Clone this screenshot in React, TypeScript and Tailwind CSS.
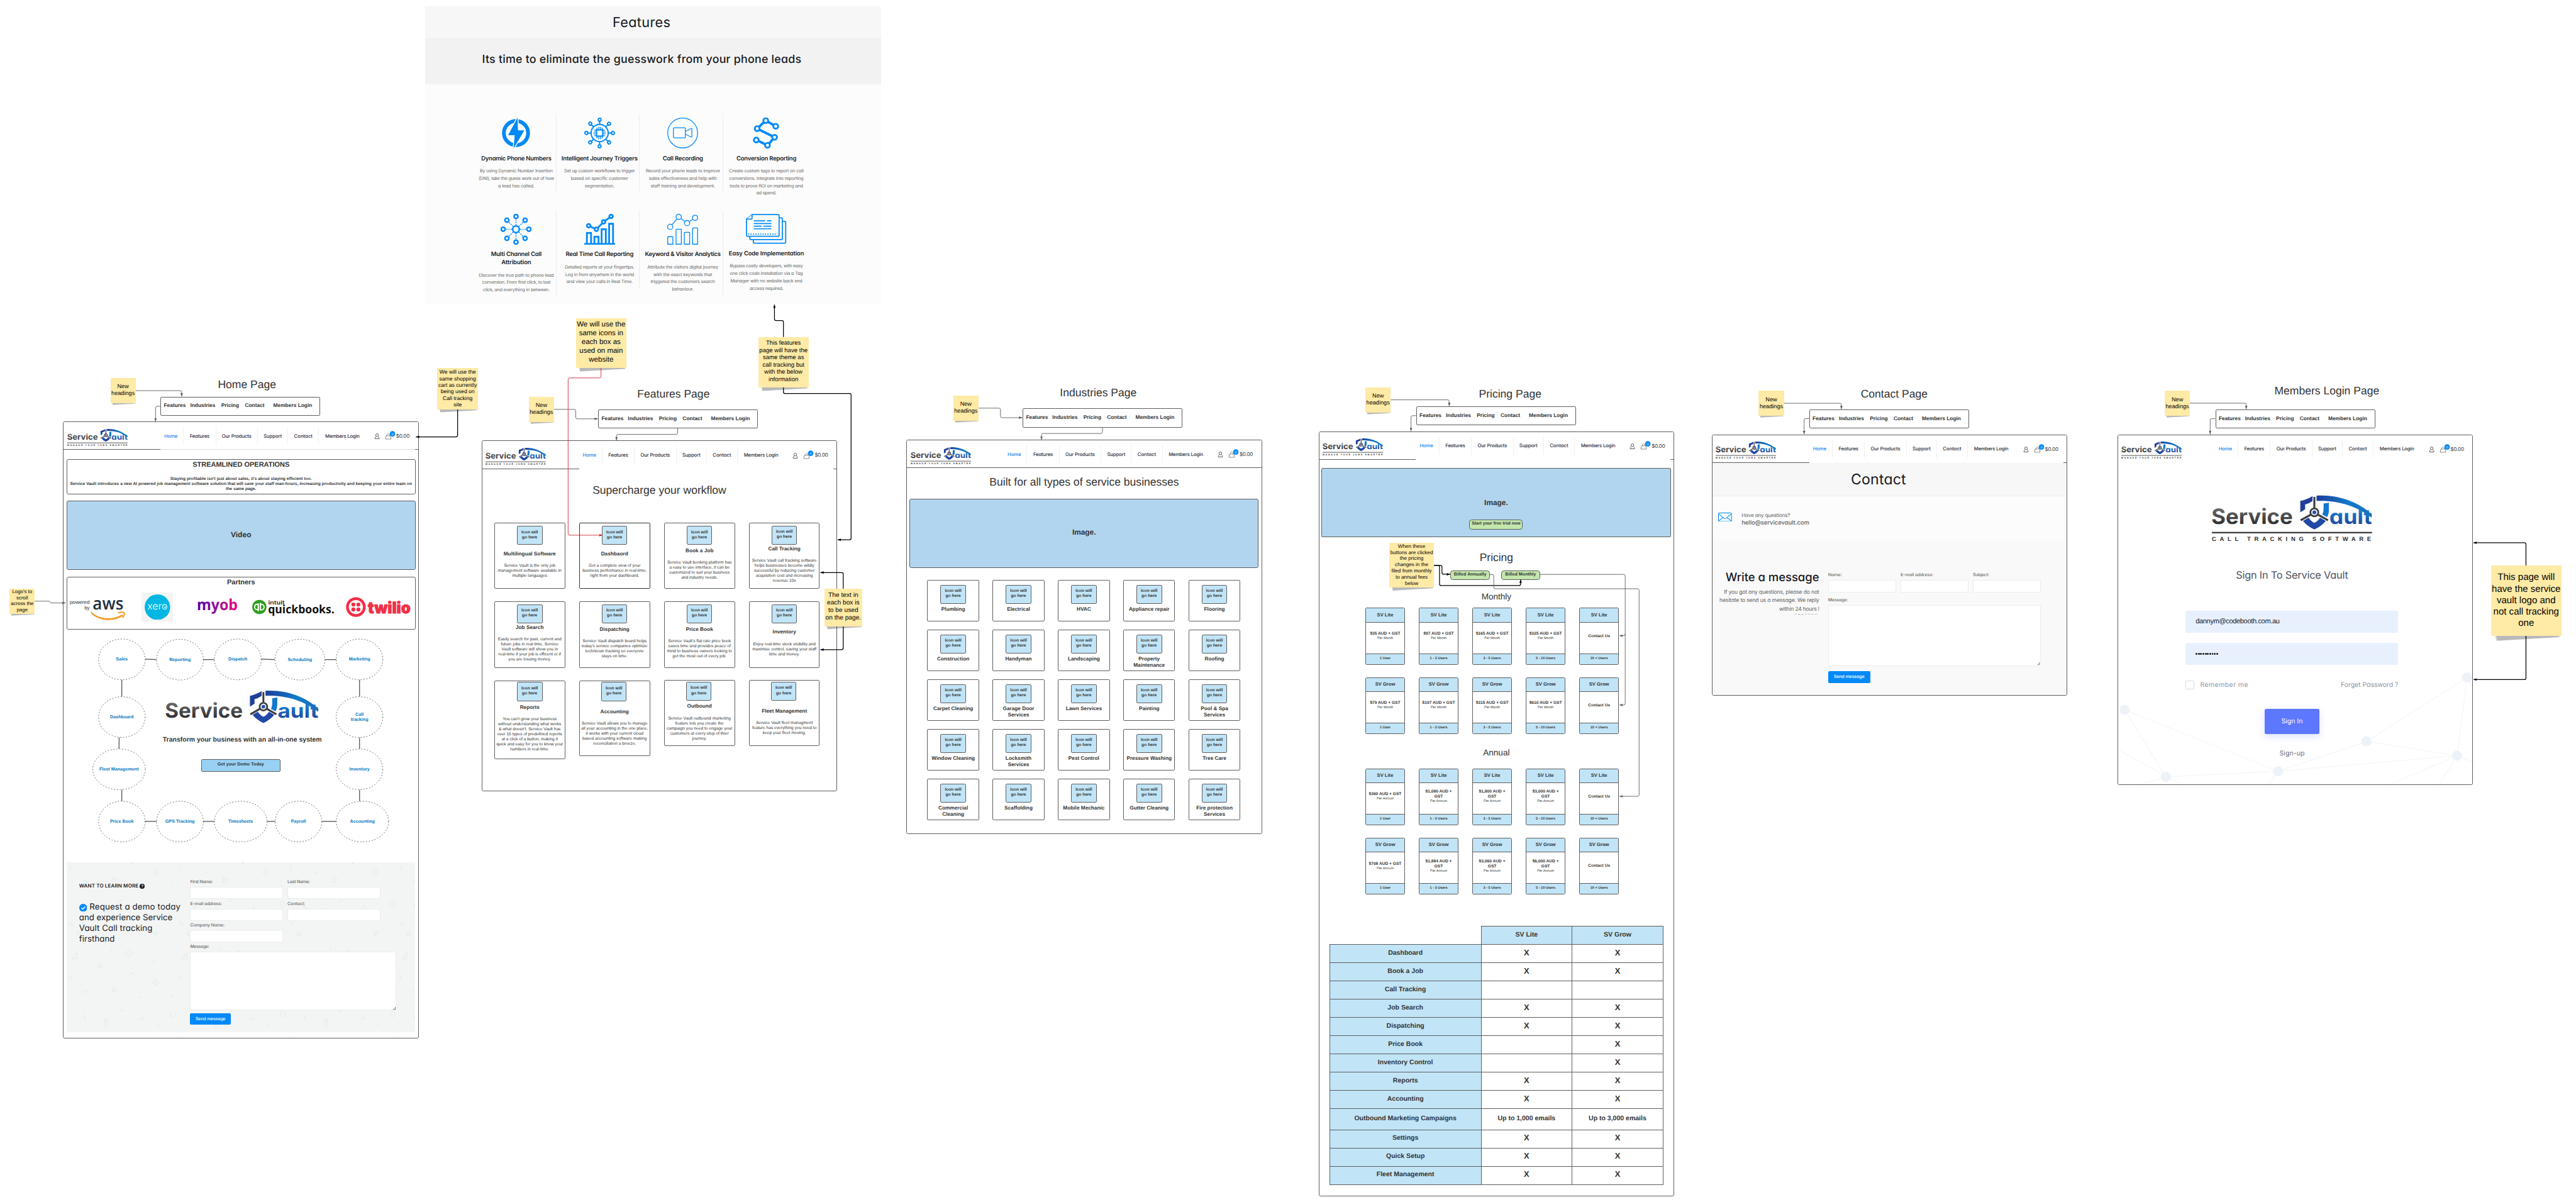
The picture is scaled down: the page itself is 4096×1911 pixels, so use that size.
import { useId, useLayoutEffect, useRef, useState } from "react";
import type { ReactNode } from "react";

const POP = "[font-family:Inter,sans-serif] [font-feature-settings:'cv11']";

/* One line of text, tracked so that it spans exactly `w` pixels. */
function Fit({ w, children, className = "" }: { w: number; children: string; className?: string }) {
  const outer = useRef<HTMLSpanElement>(null);
  const inner = useRef<HTMLSpanElement>(null);
  const [spacing, setSpacing] = useState(0);
  useLayoutEffect(() => {
    if (!outer.current || !inner.current) return;
    const scale = outer.current.getBoundingClientRect().width / w;
    const natural = inner.current.getBoundingClientRect().width / scale;
    setSpacing((w - natural) / children.length);
  }, [w, children]);
  return (
    <span ref={outer} className={"block shrink-0 whitespace-pre " + className} style={{ width: w }}>
      <span ref={inner} style={{ letterSpacing: spacing }}>
        {children}
      </span>
    </span>
  );
}

/* ---------- logo ---------- */

function VaultLogo({ tagline, className }: { tagline?: string; className: string }) {
  const id = useId();
  const blue = `${id}b`;
  const grey = `${id}g`;
  const sweep = `${id}s`;
  return (
    <svg viewBox={tagline ? "0 0 364 105" : "0 0 364 77"} className={"overflow-visible " + className}>
      <defs>
        <linearGradient id={grey} x1="0" y1="0" x2="0" y2="1">
          <stop offset="0.2" stopColor="#6a6a6c" />
          <stop offset="0.8" stopColor="#2f2f31" />
        </linearGradient>
        <linearGradient id={blue} x1="0" y1="0" x2="0" y2="1">
          <stop offset="0.2" stopColor="#1584d6" />
          <stop offset="0.9" stopColor="#213f9a" />
        </linearGradient>
        <linearGradient id={sweep} x1="0" y1="0" x2="1" y2="0">
          <stop offset="0" stopColor="#1d3f9b" />
          <stop offset="0.6" stopColor="#0f7cc9" />
          <stop offset="1" stopColor="#1c6fb8" />
        </linearGradient>
      </defs>
      <text x="-1" y="64" fontFamily="Inter, sans-serif" fontWeight="700" fontSize="48" textLength="185" lengthAdjust="spacingAndGlyphs" fill={`url(#${grey})`}>
        Service
      </text>
      <text x="267" y="64" fontFamily="Inter, sans-serif" fontWeight="700" fontSize="46" textLength="97" lengthAdjust="spacingAndGlyphs" fill={`url(#${blue})`}>
        ault
      </text>
      <path d="M201 38V12Q216 9 229 1V12Q221 18 212 20V31Z" fill="#213f9a" />
      <path d="M238 0C286 -3 334 14 364 43L363 50C330 24 286 10 238 12Z" fill={`url(#${sweep})`} />
      <path d="M254 18L266 16V34Q266 42 262 49L251 43Q254 38 254 30Z" fill="#1178cc" />
      <path d="M206 56L219 49Q225 58 233 62Q241 58 247 49L260 56Q250 69 233 77Q216 69 206 56Z" fill="#2148a6" />
      <g stroke="#fff" strokeWidth="8" fill="none">
        <path d="M233 36V4M233 38L205 54M233 38L261 54" />
      </g>
      <g stroke="#3c3c40" strokeWidth="4.5" fill="none">
        <path d="M233 28V3M225 43L202 56M241 43L264 56" />
        <circle cx="233" cy="38" r="9" fill="#fff" strokeWidth="4" />
      </g>
      <circle cx="233" cy="38" r="4.5" fill="#2a55ad" />
      {tagline && (
        <>
          <rect x="0" y="82.5" width="364" height="3" fill="#2b2b2d" />
          <text x="0" y="103.5" fontFamily="Liberation Sans, Arial, sans-serif" fontWeight="700" fontSize="13.5" textLength="362" lengthAdjust="spacing" fill="#2b2b2d">
            {tagline}
          </text>
        </>
      )}
    </svg>
  );
}

/* ---------- shared page chrome ---------- */

const NAV: [string, number, string][] = [
  ["Home", 30.4, "w-[58px] text-[#1a87ec]"],
  ["Features", 45, "w-[73.3px] text-[#2b2b3a]"],
  ["Our Products", 67, "w-[95px] text-[#2b2b3a]"],
  ["Support", 41.2, "w-[69px] text-[#2b2b3a]"],
  ["Contact", 42, "w-[70.2px] text-[#2b2b3a]"],
  ["Members Login", 78.2, "w-[106px] border-r-0 text-[#2b2b3a]"],
];

function SiteHeader({ rule }: { rule: "gap" | "full" | "light" | "none" }) {
  return (
    <div className="relative h-[63px] w-full shrink-0 bg-white">
      <div className={"flex h-full items-center " + POP}>
        <div className="w-[215.5px] pl-[8px] pt-[7px]">
          <VaultLogo tagline="MANAGE YOUR JOBS SMARTER" className="h-[39.5px] w-[137px]" />
        </div>
        <nav className="flex">
          {NAV.map(([label, w, cls]) => (
            <div key={label} className={"flex h-[40px] items-center justify-center border-r border-[#efefef] pt-[1px] text-[11px] font-medium " + cls}>
              <Fit w={w}>{label}</Fit>
            </div>
          ))}
        </nav>
        <svg viewBox="0 0 47 20" className="ml-[19px] h-[20px] w-[47px] overflow-visible">
          <g fill="none" stroke="#3a3a3a" strokeWidth="1.2">
            <circle cx="6.5" cy="8.2" r="3.1" />
            <path d="M4.5 10.8C2.500 12.600 1.800 14.100 1.600 16.500H11.400C11.200 14.100 10.500 12.600 8.500 10.800" />
            <path d="M27.200 9.800H37.200L38.600 17.200H25.800Z" stroke="#777" />
            <path d="M29 9.800C29.200 3.600 35.200 3.600 35.400 9.800" stroke="#777" />
          </g>
          <circle cx="41.6" cy="5.200" r="6.200" fill="#0089f7" />
          <text x="41.6" y="8" fontSize="7.500" textAnchor="middle" fill="#fff">0</text>
        </svg>
        <Fit w={30.5} className="ml-[3px] text-[11.500px] text-[#333]">$0.00</Fit>
      </div>
      {rule !== "none" && (
        <div className="absolute bottom-0 left-0 flex w-full justify-between">
          <div className={rule === "full" ? "h-[1.5px] w-full bg-[#5e5e5e]" : "h-[1.5px] w-[220px] bg-[#5e5e5e]"} />
          {rule === "light" && <div className="h-[1.5px] grow bg-[#dddddd]" />}
          {rule !== "full" && <div className="h-[1.5px] w-[7px] bg-[#5e5e5e]" />}
        </div>
      )}
    </div>
  );
}

function Page({ at, rule, children }: { at: string; rule: "gap" | "full" | "light" | "none"; children: ReactNode }) {
  return (
    <section className={"absolute flex w-[808.5px] flex-col overflow-hidden rounded-[4px] border-[1.5px] border-[#5e5e5e] bg-white " + at}>
      <SiteHeader rule={rule} />
      {children}
    </section>
  );
}

const PAGE_TITLES: [string, string][] = [
  ["Home Page", "left-[561.5px] top-[859px]"],
  ["Features Page", "left-[1531px] top-[881px]"],
  ["Industries Page", "left-[2496.7px] top-[878px]"],
  ["Pricing Page", "left-[3433px] top-[881px]"],
  ["Contact Page", "left-[4306px] top-[881px]"],
  ["Members Login Page", "left-[5289.6px] top-[874px]"],
];

const HEADING_BOXES = [
  "left-[365px] top-[901.5px]",
  "left-[1360px] top-[930.3px]",
  "left-[2325px] top-[928px]",
  "left-[3219.5px] top-[923.6px]",
  "left-[4113px] top-[930.3px]",
  "left-[5036.4px] top-[930.5px]",
];

const NOTES: [string, string][] = [
  ["New\nheadings", "left-[251px] top-[859px] size-[57.5px] text-[13.1px]"],
  ["We will use the\nsame shopping\ncart as currently\nbeing used on\nCall tracking\nsite", "left-[994px] top-[837px] h-[93.5px] w-[92.6px] text-[12.3px]"],
  ["Logo's to\nscroll\nacross the\npage", "left-[21.7px] top-[1338px] size-[57.5px] text-[11.3px]"],
  ["We will use the\nsame icons in\neach box as\nused on main\nwebsite", "left-[1309px] top-[723px] h-[114px] w-[115px] text-[16.45px]"],
  ["This features\npage will have the\nsame theme as\ncall tracking but\nwith the below\ninformation", "left-[1724px] top-[766px] size-[114px] text-[13.7px]"],
  ["New\nheadings", "left-[1202px] top-[902px] size-[57.5px] text-[13.1px]"],
  ["The text in\neach box is\nto be used\non the page.", "left-[1874px] top-[1338px] size-[86px] text-[14.6px]"],
  ["New\nheadings", "left-[2167px] top-[899px] size-[57.5px] text-[13.1px]"],
  ["New\nheadings", "left-[3104px] top-[880px] size-[57.5px] text-[13.1px]"],
  ["When these\nbuttons are clicked\nthe pricing\nchanges in the\nfiled from monthly\nto annual fees\nbelow", "left-[3158px] top-[1234px] size-[102px] text-[11.65px]"],
  ["New\nheadings", "left-[3998px] top-[888px] size-[57.5px] text-[13.1px]"],
  ["New\nheadings", "left-[4921px] top-[888px] size-[57.5px] text-[13.1px]"],
  ["This page will\nhave the service\nvault logo and\nnot call tracking\none", "left-[5663px] top-[1286px] size-[159.5px] text-[21.5px]"],
];

function Note({ text, at }: { text: string; at: string }) {
  return (
    <div className={"absolute " + at}>
      <svg viewBox="0 0 100 8" preserveAspectRatio="none" className="absolute left-0 top-full h-[7%] w-full overflow-visible">
        <path d="M6 -2H98L97 2L8 8Z" fill="#000" opacity="0.27" className="blur-[0.8px]" />
      </svg>
      <div className="relative flex size-full items-center justify-center whitespace-pre bg-[#ffeaa6] pb-[2px] text-center leading-[1.2] text-black">
        {text}
      </div>
    </div>
  );
}

function IconSlot({ className = "" }: { className?: string }) {
  return (
    <div className={"flex h-[43.5px] w-[58px] shrink-0 items-center justify-center whitespace-pre rounded-[3px] border-[1.5px] border-[#5e5e5e] bg-[#c1e4f7] pb-[2px] text-center text-[9.6px] font-bold leading-[11.5px] " + className}>
      {"Icon will\ngo here"}
    </div>
  );
}

/* ---------- home page ---------- */

function PartnerLogos() {
  return (
    <div className="mt-[13px] flex h-[66px] items-center">
      <svg viewBox="0 0 130 66" className="ml-[7px] h-[66px] w-[130px] overflow-visible">
        <g fill="#232f3e">
          <text x="45" y="26" fontSize="11.3" textAnchor="end" textLength="45" lengthAdjust="spacingAndGlyphs">powered</text>
          <text x="45" y="39" fontSize="11.3" textAnchor="end">by</text>
          <text x="52" y="39" fontSize="39" fontWeight="600" fontFamily="Open Sans, sans-serif" textLength="70" lengthAdjust="spacingAndGlyphs">aws</text>
        </g>
        <path d="M49 45.5C66 62 96 64 118 51.5C119.5 50.6 120.6 52 119.4 53C100 66 68 64.5 49.5 47.5Z" fill="#f7981f" stroke="#f7981f" strokeWidth="1.8" />
        <path d="M110 47C115 44 121 44.5 123.5 46C125.5 48 123 54.5 119.5 57.5" fill="none" stroke="#f7981f" strokeWidth="2.8" />
      </svg>
      <div className="ml-[32.5px] flex h-[65px] w-[72px] items-center justify-center bg-[#f4f4f4]">
        <svg viewBox="0 0 58 58" className="size-[58px]">
          <circle cx="29" cy="29" r="29" fill="#00b7e3" />
          <text x="29" y="34.5" fontSize="22" fontWeight="300" fontFamily="Inter, sans-serif" textAnchor="middle" fill="#fff" textLength="46" lengthAdjust="spacingAndGlyphs">xero</text>
          <circle cx="46.5" cy="29" r="1.6" fill="#fff" />
        </svg>
      </div>
      <svg viewBox="0 0 94 46" className="ml-[53px] h-[46px] w-[94px] overflow-visible">
        <defs>
          <linearGradient id="myob" x1="0" x2="1">
            <stop offset="0.1" stopColor="#5a00a5" />
            <stop offset="0.55" stopColor="#a0139a" />
            <stop offset="1" stopColor="#f00078" />
          </linearGradient>
        </defs>
        <text x="0" y="30" fontSize="35" fontWeight="700" fontFamily="Open Sans, sans-serif" textLength="93" lengthAdjust="spacingAndGlyphs" fill="url(#myob)">myob</text>
      </svg>
      <svg viewBox="0 0 188 46" className="ml-[32px] h-[46px] w-[188px] overflow-visible">
        <circle cx="16.3" cy="23" r="16.2" fill="#2ca01c" />
        <g fill="none" stroke="#fff" strokeWidth="2.6">
          <path d="M15.4 16.4H11.8A6.2 6.2 0 0 0 11.8 29H13.8V20M17.4 29.4H20.8A6.2 6.2 0 0 0 20.8 16.8H18.8V26" />
          <path d="M13.8 16.4V32.6M18.8 13.4V29.4" />
        </g>
        <text x="36.5" y="17.5" fontSize="12.5" fontWeight="600" fontFamily="Inter, sans-serif" textLength="37" lengthAdjust="spacingAndGlyphs" fill="#222">intuit</text>
        <text x="36" y="36.5" fontSize="26" fontWeight="700" fontFamily="Open Sans, sans-serif" textLength="151" lengthAdjust="spacingAndGlyphs" fill="#111">quickbooks.</text>
      </svg>
      <svg viewBox="0 0 148 46" className="ml-[26px] h-[46px] w-[148px] overflow-visible">
        <circle cx="22.7" cy="23" r="19.2" fill="none" stroke="#f22f46" strokeWidth="6.4" />
        <g fill="#f22f46">
          <circle cx="17" cy="17.3" r="4.6" />
          <circle cx="28.4" cy="17.3" r="4.6" />
          <circle cx="17" cy="28.7" r="4.6" />
          <circle cx="28.4" cy="28.7" r="4.6" />
          <text x="50" y="36.6" fontSize="36" fontWeight="900" fontFamily="Inter, sans-serif" textLength="97" lengthAdjust="spacingAndGlyphs" stroke="#f22f46" strokeWidth="1.2">twilio</text>
        </g>
      </svg>
    </div>
  );
}

/* label, left, right, top */
const MODULES: [string, number, number, number][] = [
  ["Sales", 224.2, 330, 1452.4],
  ["Reporting", 356, 462.3, 1453],
  ["Dispatch", 487.5, 593.9, 1452.4],
  ["Scheduling", 625.2, 738.7, 1453],
  ["Marketing", 764.5, 870.3, 1452.4],
  ["Dashboard", 224.2, 330, 1583.5],
  ["Call\ntracking", 764.5, 870.3, 1583.5],
  ["Fleet Management", 211, 330.5, 1702.2],
  ["Inventory", 764.5, 870.3, 1702.2],
  ["Price Book", 224.2, 330, 1821],
  ["GPS Tracking", 356, 462.3, 1821],
  ["Timesheets", 487.5, 607, 1821],
  ["Payroll", 625.7, 731.6, 1821],
  ["Accounting", 764.5, 883.5, 1821],
];

function ModuleDiagram() {
  return (
    <div className="relative flex h-[529px] w-full shrink-0 flex-col items-center">
      <svg viewBox="144.5 1431 806 529" className="absolute inset-0 h-[529px] w-[806px]">
        <g stroke="#4d4d4d" strokeWidth="1.8" fill="none">
          <path d="M330 1498L356 1499M462 1499H488M594 1498L625 1499M739 1499H765M330 1867H356M462 1867H488M607 1867H626M732 1867H765" />
          <path d="M277 1545V1583M271 1676L270.5 1702M277 1795V1821M817.5 1545V1583M817.5 1676V1702M817.5 1795V1821" />
        </g>
        {MODULES.map(([label, x1, x2, y]) => {
          const cx = (x1 + x2) / 2;
          const lines = label.split("\n");
          return (
            <g key={label}>
              <ellipse cx={cx} cy={y + 46.3} rx={(x2 - x1) / 2} ry="46.3" fill="#fff" stroke="#4d4d4d" strokeWidth="1.3" strokeDasharray="2.6 4" />
              {lines.map((line, i) => (
                <text key={line} x={cx} y={y + 49 + (i - (lines.length - 1) / 2) * 12.4} textAnchor="middle" fontSize="10.25" fontWeight="700" fill="#0277bd">
                  {line}
                </text>
              ))}
            </g>
          );
        })}
      </svg>
      <VaultLogo className="relative ml-[5px] mt-[139px] h-[74px] w-[348px]" />
      <p className="relative ml-[7px] mt-[30px] text-[15px] font-bold leading-[18px]">Transform your business with an all-in-one system</p>
      <div className="relative mt-[33px] flex h-[28.7px] w-[180px] items-center justify-center rounded-[3px] border-[1.5px] border-[#5e5e5e] bg-[#99d1f4] pb-[3px] text-[10.3px] font-bold">
        Get your Demo Today
      </div>
    </div>
  );
}

function ConfettiPattern() {
  return (
    <svg className="absolute inset-0 size-full">
      <defs>
        <pattern id="confetti" width="250" height="250" patternUnits="userSpaceOnUse">
          <g fill="none" stroke="#e6e9e9" strokeWidth="1.6">
            <path d="M7 6L11 17M63 24H71M202 15L207.500 22L202 29L196.500 22ZM35 48A6.500 6.500 0 0 1 48 48" />
            <path d="M105 34V46L115 40ZM118 91L128 84M164 106H175V96M40 95L38.500 101H43L41.500 107M85 107L91 105L94 121L88 123Z" />
            <path d="M6 135L15 144M197 159H207L202 166ZM100 194V202M12 219L23 219L23 205ZM192 219L203 227M76 230L81 235L76 241L71 235Z" />
            <circle cx="241" cy="95" r="6" />
            <circle cx="28" cy="162" r="4" />
            <circle cx="141" cy="207" r="6" />
          </g>
          <g fill="#e6e9e9">
            <circle cx="150" cy="2" r="2.2" />
            <circle cx="239" cy="53" r="1.8" />
            <circle cx="208" cy="120" r="1.8" />
            <circle cx="70" cy="168" r="1.8" />
            <circle cx="165" cy="57" r="2" />
          </g>
        </pattern>
      </defs>
      <rect width="100%" height="100%" fill="url(#confetti)" />
    </svg>
  );
}

function Field({ label, w, box }: { label: string; w: number; box: string }) {
  return (
    <label className="block">
      <Fit w={w} className="text-[10px] font-medium leading-[14px] text-[#6c6c6c]">{label}</Fit>
      <div className={"relative border border-[#ececec] bg-white " + box} />
    </label>
  );
}

const GRIP = "after:absolute after:bottom-[1px] after:right-[1px] after:size-[5px] after:border-b after:border-r after:border-[#777] after:content-['']";

function DemoForm() {
  return (
    <div className={"relative ml-[6.5px] h-[385.5px] w-[793px] shrink-0 bg-[#f3f5f5] " + POP}>
      <ConfettiPattern />
      <div className="relative flex">
        <div className="w-[281.5px] pl-[29px] pt-[46px] text-[#161922]">
          <div className="flex items-center gap-[3px]">
            <Fit w={135} className="text-[11.5px] font-semibold leading-[17px]">WANT TO LEARN MORE</Fit>
            <span className="flex size-[11.5px] items-center justify-center rounded-full bg-[#161922] text-[9px] font-bold text-white">?</span>
          </div>
          <div className="mt-[27.5px] text-[19px] leading-[24.3px]">
            <div className="flex items-center gap-[5.5px]">
              <svg viewBox="0 0 18 18" className="size-[18px]">
                <circle cx="9" cy="9" r="9" fill="#0089f7" />
                <path d="M4.8 9.2L7.9 12.2L13.4 6.4" fill="none" stroke="#fff" strokeWidth="2.2" />
              </svg>
              <Fit w={207.3}>Request a demo today</Fit>
            </div>
            <Fit w={212.3}>and experience Service</Fit>
            <Fit w={166.7}>Vault Call tracking</Fit>
            <Fit w={81}>firsthand</Fit>
          </div>
        </div>
        <div className="flex flex-col gap-[3.2px] pt-[37.5px]">
          <div className="flex gap-[10px]">
            <Field label="First Name:" w={51} box="mt-[4.7px] h-[27px] w-[211px]" />
            <Field label="Last Name:" w={51} box="mt-[4.7px] h-[27px] w-[211px]" />
          </div>
          <div className="flex gap-[10px]">
            <Field label="E-mail address:" w={72} box="mt-[4.7px] h-[27px] w-[211px]" />
            <Field label="Contact:" w={40} box="mt-[4.7px] h-[27px] w-[211px]" />
          </div>
          <Field label="Company Name:" w={78} box="mt-[4.7px] h-[27px] w-[211px]" />
          <Field label="Message:" w={43} box={"mt-[4.7px] h-[133.5px] w-[469px] " + GRIP} />
          <div className="mt-[3.5px] flex h-[25.7px] w-[92.5px] items-center justify-center rounded-[3px] bg-[#0089f7] text-[10px] font-medium text-white">
            <Fit w={68}>Send message</Fit>
          </div>
        </div>
      </div>
    </div>
  );
}

function HomePage() {
  const box = "ml-[6.5px] w-[794px] shrink-0 rounded-[4px] border-[1.5px] border-[#5e5e5e] ";
  return (
    <Page at="left-[143px] top-[958.5px] h-[1402.5px]" rule="light">
      <div className={box + "mt-[21px] h-[79.5px] pt-[2px] text-center font-bold"}>
        <p className="text-[15.7px] leading-[19px]">STREAMLINED OPERATIONS</p>
        <p className="mt-[17px] whitespace-pre text-[9.6px] leading-[11.5px]">
          {"Staying profitable isn't just about sales, it's about staying efficient too.\nService Vault introduces a new AI powered job management software solution that will save your staff man-hours, increasing productivity and keeping your entire team on\nthe same page."}
        </p>
      </div>
      <div className={box + "mt-[14.5px] flex h-[158px] items-center justify-center bg-[#b1d5ef] pb-[3px] text-[17.2px] font-bold"}>Video</div>
      <div className={box + "mt-[15.5px] h-[120px] pt-[2px]"}>
        <p className="text-center text-[15.7px] font-bold leading-[19px]">Partners</p>
        <PartnerLogos />
      </div>
      <ModuleDiagram />
      <DemoForm />
    </Page>
  );
}

/* ---------- call tracking features sheet ---------- */

const SPOKES = [0, 45, 90, 135, 180, 225, 270, 315];

function BoltIcon() {
  return (
    <svg viewBox="0 0 70 70" className="size-[70px]">
      <circle cx="35" cy="35" r="27.5" fill="none" stroke="#0089f7" strokeWidth="8.5" />
      <path d="M38.5 0L17 40H32L29.500 70L54 29H39.500Z" fill="#0089f7" stroke="#fcfcfc" strokeWidth="4" paintOrder="stroke" />
    </svg>
  );
}

function ChipIcon() {
  return (
    <svg viewBox="0 0 70 70" className="size-[70px]">
      <g fill="none" stroke="#0089f7" strokeWidth="2.8">
        <circle cx="35" cy="35" r="19.5" />
        {SPOKES.map((a) => (
          <g key={a} transform={`rotate(${a} 35 35)`}>
            <path d="M35 15.5V8" />
            <circle cx="35" cy="4.8" r="3.4" />
          </g>
        ))}
        <rect x="28" y="28" width="14" height="14" />
        <path d="M29 28V23M33 28V21M37 28V21M41 28V23M29 42V47M33 42V49M37 42V49M41 42V47M28 29H23M28 33H21M28 37H21M28 41H23M42 29H47M42 33H49M42 37H49M42 41H47" strokeWidth="2" />
      </g>
    </svg>
  );
}

function CameraIcon() {
  return (
    <svg viewBox="0 0 70 70" className="size-[70px]">
      <g fill="none" stroke="#0089f7" strokeWidth="1.8" strokeLinejoin="round">
        <circle cx="35" cy="35" r="34" />
        <rect x="14" y="23" width="27" height="23" rx="1.5" />
        <path d="M41 31.5L54 25Q56 24.500 56 26.500V42.500Q56 44.500 54 44L41 37.500" />
      </g>
    </svg>
  );
}

function PathIcon() {
  const nodes = [[56.4, 19.6], [33.7, 6.7], [14.2, 25], [53.8, 44.6], [37.7, 63], [12.2, 50.9]];
  return (
    <svg viewBox="0 0 70 70" className="size-[70px]">
      <polyline points={nodes.map((n) => n.join(",")).join(" ")} fill="none" stroke="#0089f7" strokeWidth="5.5" />
      {nodes.map(([x, y]) => (
        <circle key={x} cx={x} cy={y} r="5.5" fill="#fcfcfc" stroke="#0089f7" strokeWidth="4" />
      ))}
    </svg>
  );
}

function HubIcon() {
  return (
    <svg viewBox="0 0 70 70" className="size-[70px]">
      <g fill="none" stroke="#0089f7" strokeWidth="3.6">
        <circle cx="35" cy="35" r="7.5" />
        {SPOKES.map((a) => (
          <g key={a} transform={`rotate(${a} 35 35)`}>
            <path d="M35 25.5V10" strokeWidth="2.4" strokeDasharray="2.4 2.6" />
            <circle cx="35" cy="5.8" r="4.5" fill="#fcfcfc" />
          </g>
        ))}
      </g>
    </svg>
  );
}

function TrendIcon({ bold }: { bold: boolean }) {
  const line = bold
    ? [[10, 27], [27.5, 35], [44, 18.3], [61, 5.8]]
    : [[6.7, 29.5], [26, 6.8], [45, 21], [63.2, 9]];
  return (
    <svg viewBox="0 0 70 70" className="size-[70px]">
      <g fill="none" stroke="#0089f7" strokeWidth={bold ? 4 : 1.9}>
        {bold ? (
          <path d="M6 68V43.500H15.500V68M23 68V52H32.500V68M39.500 68V35H49V68M56.500 68V22.500H65.500V68M0 68.500H70" />
        ) : (
          <path d="M1 69V53Q1 51.800 2.200 51.800H11.500Q12.700 51.800 12.700 53V69ZM20 69V36Q20 34.800 21.200 34.800H30.800Q32 34.800 32 36V69ZM38.800 69V43Q38.800 42 40 42H49.700Q50.900 42 50.900 43V69ZM57.600 69V33.200Q57.600 32 58.800 32H67.900Q69 32 69 33.200V69Z" />
        )}
        <polyline points={line.map((n) => n.join(",")).join(" ")} />
        {line.map(([x, y]) => (
          <circle key={x} cx={x} cy={y} r={bold ? 4 : 6} fill="#fcfcfc" />
        ))}
      </g>
    </svg>
  );
}

function DocsIcon() {
  return (
    <svg viewBox="0 0 92 68" className="mb-[2px] h-[68px] w-[92px]">
      <g fill="#fcfcfc" stroke="#0089f7" strokeWidth="2.5" strokeLinejoin="round">
        <rect x="17" y="17" width="73.5" height="49.5" rx="2.5" />
        <rect x="9" y="9" width="74" height="49.5" rx="2.5" />
        <path d="M14 1.5H73Q75.500 1.500 75.500 4V48.500Q75.500 51 73 51H4Q1.500 51 1.500 48.500V12Z" />
        <path d="M14 1.5V9.500Q14 12 11.500 12H1.500" />
      </g>
      <g stroke="#0089f7" strokeWidth="2.4">
        <path d="M18 16H44M48 16H58M18 22H58M18 28H36M40 28H58M18 34H58" />
        <path d="M5 46H72" strokeDasharray="2.5 3" />
      </g>
    </svg>
  );
}

type Line = [string, number];
type FeatureCol = { icon: ReactNode; title: Line[]; body: Line[]; rule: string; pad: string };

const FEATURE_ROWS: FeatureCol[][] = [
  [
    { icon: <BoltIcon />, pad: "mt-[15.5px]", title: [["Dynamic Phone Numbers", 159.4]], body: [["By using Dynamic Number Insertion", 165.4], ["(DNI), take the guess work out of how", 171.4], ["a lead has called.", 82.4]], rule: "h-[177px] border-r" },
    { icon: <ChipIcon />, pad: "mt-[15.5px]", title: [["Intelligent Journey Triggers", 172.8]], body: [["Set up custom workflows to trigger", 160.7], ["based on specific customer", 130], ["segmentation.", 67]], rule: "h-[177px] border-r" },
    { icon: <CameraIcon />, pad: "mt-[15.5px]", title: [["Call Recording", 91.7]], body: [["Record your phone leads to improve", 168.7], ["sales effectiveness and help with", 154], ["staff training and development.", 146.6]], rule: "h-[177px] border-r" },
    { icon: <PathIcon />, pad: "mt-[15.5px]", title: [["Conversion Reporting", 136]], body: [["Create custom tags to report on call", 169.4], ["conversions. Integrate into reporting", 168.7], ["tools to prove ROI on marketing and", 166.7], ["ad spend.", 46.2]], rule: "h-[177px]" },
  ],
  [
    { icon: <HubIcon />, pad: "mt-[14.5px]", title: [["Multi Channel Call", 115], ["Attribution", 67.6]], body: [["Discover the true path to phone lead", 170.7], ["conversion. From first click, to last", 155.3], ["click, and everything in between.", 151.3]], rule: "h-[194px] border-r" },
    { icon: <TrendIcon bold />, pad: "mt-[14.5px]", title: [["Real Time Call Reporting", 154]], body: [["Detailed reports at your fingertips.", 158], ["Log in from anywhere in the world", 156], ["and view your calls in Real Time.", 150]], rule: "h-[177px] border-r" },
    { icon: <TrendIcon bold={false} />, pad: "mt-[14.5px]", title: [["Keyword & Visitor Analytics", 172]], body: [["Attribute the visitors digital journey", 161.4], ["with the exact keywords that", 133.3], ["triggered the customers search", 146.6], ["behaviour.", 48.9]], rule: "h-[193px] border-r" },
    { icon: <DocsIcon />, pad: "mt-[12.5px]", title: [["Easy Code Implementation", 170.8]], body: [["Bypass costly developers, with easy", 166], ["one click code installation via a Tag", 166], ["Manager with no website back end", 163.4], ["access required.", 76.3]], rule: "h-[193px]" },
  ],
];

function FeaturesSheet() {
  return (
    <section className={"absolute left-[966px] top-[15px] flex h-[677px] w-[1037px] flex-col bg-[#fcfcfc] text-[#161922] " + POP}>
      <div className="h-[74px] border-b border-[#ebebeb] bg-[#f7f7f7] pt-[19px]">
        <Fit w={132} className="ml-[426.5px] text-[31px] leading-[36px]">Features</Fit>
      </div>
      <div className="h-[102px] bg-[#f2f2f2] pt-[31.5px]">
        <Fit w={726} className="ml-[130px] text-[25.5px] font-medium leading-[32px]">Its time to eliminate the guesswork from your phone leads</Fit>
      </div>
      {FEATURE_ROWS.map((row, r) => (
        <div key={r} className={"ml-[110px] flex items-start " + (r === 0 ? "mt-[68px] h-[219.5px]" : "")}>
          {row.map((c) => (
            <div key={c.title[0][0]} className={"w-[189.3px] border-[#ececec] " + c.rule}>
              <div className="flex flex-col items-center pl-[7.5px] pt-[8px]">
                {c.icon}
                <div className={c.pad}>
                  {c.title.map(([t, w]) => (
                    <Fit key={t} w={w} className="mx-auto text-[13.5px] font-semibold leading-[18.4px]">{t}</Fit>
                  ))}
                </div>
                <div className="mt-[9.5px] text-[10.3px] leading-[16.8px] text-[#6a6a6a]">
                  {c.body.map(([t, w]) => (
                    <Fit key={t} w={w} className="mx-auto">{t}</Fit>
                  ))}
                </div>
              </div>
            </div>
          ))}
        </div>
      ))}
    </section>
  );
}

/* ---------- features page ---------- */

type Card = { title: string; body: string; box: string; gap: string };

const FEATURE_CARDS: Card[][] = [
  [
    { title: "Multilingual Software", body: "Service Vault is the only job\nmanagement software available in\nmultiple languages", box: "h-[150.5px] border-[#5e5e5e] pt-[5.5px]", gap: "mt-[13px]" },
    { title: "Dashbaord", body: "Get a complete view of your\nbusiness performance in real-time,\nright from your dashboard.", box: "h-[150.5px] border-[#333333] pt-[5.5px]", gap: "mt-[13px]" },
    { title: "Book a Job", body: "Service Vault booking platform has\na easy to use interface, it can be\ncustomized to suit your business\nand industry needs.", box: "h-[150.5px] border-[#5e5e5e] pt-[5.5px]", gap: "mt-[6.5px]" },
    { title: "Call Tracking", body: "Service Vault call tracking software\nhelps businesses become wildly\nsuccessful by reducing customer\nacquisition cost and increasing\nrevenue 10x", box: "h-[150.5px] border-[#5e5e5e] pt-[5px]", gap: "mt-[2px]" },
  ],
  [
    { title: "Job Search", body: "Easily search for past, current and\nfuture jobs in real time, Service\nVault software will show you in\nreal-time if your job is efficent or if\nyou are lossing money.", box: "h-[150.5px] border-[#5e5e5e] pt-[5px]", gap: "mt-[2px]" },
    { title: "Dispatching", body: "Service Vault dispatch board helps\ntoday's service companies optimize\ntechnician tracking so everyone\nstays on time.", box: "h-[150.5px] border-[#5e5e5e] pt-[5px]", gap: "mt-[6.5px]" },
    { title: "Price Book", body: "Service Vault's flat rate price book\nsaves time and provides peace of\nmind to business owners looking to\nget the most out of every job.", box: "h-[150.5px] border-[#5e5e5e] pt-[5px]", gap: "mt-[6.5px]" },
    { title: "Inventory", body: "Enjoy real-time stock visibility and\nmaximise control, saving your staff\ntime and money.", box: "h-[150.5px] border-[#5e5e5e] pt-[5px]", gap: "mt-[13px]" },
  ],
  [
    { title: "Reports", body: "You can't grow your business\nwithout understanding what works\n& what doesn't. Service Vault has\nover 15 types of predefined reports\nat a click of a button, making it\nquick and easy for you to know your\nnumbers in real-time.", box: "h-[179.5px] border-[#5e5e5e] pt-[2.5px]", gap: "mt-[7px]" },
    { title: "Accounting", body: "Service Vault allows you to manage\nall your accounting in the one place,\nit works with your current cloud\nbased accounting software making\nreconciliation a breeze.", box: "h-[171.5px] border-[#5e5e5e] pt-[2.5px]", gap: "mt-[17px]" },
    { title: "Outbound", body: "Service Vault outbound marketing\nfeature lets you create the\ncampaign you need to engage your\ncustomers at every step of thier\njourney.", box: "-mt-[1px] h-[150px] border-[#5e5e5e] pt-[3px]", gap: "mt-[5.5px]" },
    { title: "Fleet Management", body: "Service Vault fleet managment\nfeature has everything you need to\nkeep your fleet moving.", box: "-mt-[1px] h-[150px] border-[#5e5e5e] pt-[3px]", gap: "mt-[16.5px]" },
  ],
];

function FeaturesPage() {
  return (
    <Page at="left-[1094.7px] top-[1001.5px] h-[796.5px]" rule="gap">
      <h2 className="mt-[33.5px] text-center text-[25.1px] leading-[30px]">Supercharge your workflow</h2>
      <div className="mt-[59px] flex flex-col gap-[28.5px] pl-[27.5px]">
        {FEATURE_CARDS.map((row, r) => (
          <div key={r} className="flex items-start gap-[32px]">
            {row.map((c) => (
              <div key={c.title} className={"flex w-[161px] flex-col items-center rounded-[3px] border-[1.5px] " + c.box}>
                <IconSlot className={r === 2 && c.title !== "Reports" ? "mr-[3px]" : ""} />
                <h3 className={"whitespace-nowrap text-[11.8px] font-bold leading-[14px] " + c.gap}>{c.title}</h3>
                <p className="mt-[15px] whitespace-pre text-center text-[9.55px] leading-[11.45px]">{c.body}</p>
              </div>
            ))}
          </div>
        ))}
      </div>
    </Page>
  );
}

/* ---------- industries page ---------- */

const INDUSTRIES = [
  "Plumbing", "Electrical", "HVAC", "Appliance repair", "Flooring",
  "Construction", "Handyman", "Landscaping", "Property\nMaintenance", "Roofing",
  "Carpet Cleaning", "Garage Door\nServices", "Lawn Services", "Painting", "Pool & Spa\nServices",
  "Window Cleaning", "Locksmith\nServices", "Pest Control", "Pressure Washing", "Tree Care",
  "Commercial\nCleaning", "Scaffolding", "Mobile Mechanic", "Gutter Cleaning", "Fire protection\nServices",
];

function IndustriesPage() {
  return (
    <Page at="left-[2060.5px] top-[999.3px] h-[896.5px]" rule="full">
      <h2 className="mt-[17px] text-center text-[25.1px] leading-[30px]">Built for all types of service businesses</h2>
      <div className="ml-[5.5px] mt-[22.5px] flex h-[158px] w-[794px] items-center justify-center rounded-[4px] border-[1.5px] border-[#5e5e5e] bg-[#b1d5ef] pb-[2px] text-[17px] font-bold">Image.</div>
      <div className="ml-[46px] mt-[26.3px] grid grid-cols-[repeat(5,118px)] gap-x-[30.5px] gap-y-[18.1px]">
        {INDUSTRIES.map((name) => (
          <div key={name} className="flex h-[95px] flex-col items-center rounded-[3px] border-[1.5px] border-[#5e5e5e] pt-[10px]">
            <IconSlot />
            <h3 className="mt-[5.3px] whitespace-pre text-center text-[11.8px] font-bold leading-[14.3px]">{name}</h3>
          </div>
        ))}
      </div>
    </Page>
  );
}

/* ---------- pricing page ---------- */

const USERS = ["1 User", "1 - 3 Users", "3 - 5 Users", "5 - 10 Users", "10 + Users"];

function PriceRow({ plan, prices, period, className = "" }: { plan: string; prices: string[]; period: string; className?: string }) {
  return (
    <div className={"flex gap-[31.6px] pl-[105px] " + className}>
      {USERS.map((users, i) => (
        <div key={users} className="flex h-[129px] w-[90px] flex-col overflow-hidden rounded-[3px] border-[1.5px] border-[#5e5e5e] bg-white text-center">
          <div className="flex h-[32px] items-center justify-center border-b-[1.5px] border-[#5e5e5e] bg-[#c1e4f7] pb-[2px] text-[10.9px] font-bold">{plan}</div>
          <div className="flex grow flex-col items-center justify-center pb-[8px] font-bold">
            <p className="whitespace-pre text-[9.5px] leading-[11.4px]">{prices[i] ?? "Contact Us"}</p>
            {prices[i] && <p className="text-[7.8px] font-normal leading-[9.6px]">{period}</p>}
          </div>
          <div className="flex h-[24px] items-center justify-center border-t-[1.5px] border-[#5e5e5e] bg-[#c1e4f7] pb-[2px] text-[7.9px] font-bold">{users}</div>
        </div>
      ))}
    </div>
  );
}

const MATRIX: [string, string, string][] = [
  ["Dashboard", "X", "X"],
  ["Book a Job", "X", "X"],
  ["Call Tracking", "", ""],
  ["Job Search", "X", "X"],
  ["Dispatching", "X", "X"],
  ["Price Book", "", "X"],
  ["Inventory Control", "", "X"],
  ["Reports", "X", "X"],
  ["Accounting", "X", "X"],
  ["Outbound Marketing Campaigns", "Up to 1,000 emails", "Up to 3,000 emails"],
  ["Settings", "X", "X"],
  ["Quick Setup", "X", "X"],
  ["Fleet Management", "X", "X"],
];

function PricingPage() {
  const green = "flex items-center justify-center whitespace-nowrap rounded-[6px] border-[1.5px] border-[#5e5e5e] bg-[#c3e7ac] pb-[2px] font-bold ";
  const cell = "border-[1.5px] border-[#5e5e5e] p-0 pb-[4px] text-center font-bold ";
  return (
    <Page at="left-[2997.5px] top-[980.3px] h-[1739px]" rule="gap">
      <div className="ml-[5px] mt-[19.5px] flex h-[157px] w-[794.5px] shrink-0 flex-col items-center rounded-[3px] border-[1.5px] border-[#5e5e5e] bg-[#b1d5ef] pt-[66px]">
        <p className="text-[17px] font-bold leading-[20px]">Image.</p>
        <div className={green + "mt-[30px] h-[22px] w-[121.5px] text-[9.9px]"}>Start your free trial now</div>
      </div>
      <h2 className="mt-[31.5px] text-center text-[24.9px] leading-[30px]">Pricing</h2>
      <div className="mt-[13.5px] flex gap-[25.3px] pl-[298.5px]">
        <div className={green + "h-[21.5px] w-[89.5px] text-[10.3px]"}>Billed Annually</div>
        <div className={green + "h-[21.5px] w-[89px] text-[10.3px]"}>Billed Monthly</div>
      </div>
      <h3 className="mt-[27.5px] text-center text-[19.4px] leading-[24px]">Monthly</h3>
      <PriceRow plan="SV Lite" period="Per Month" prices={["$35 AUD + GST", "$97 AUD + GST", "$165 AUD + GST", "$325 AUD + GST"]} className="mt-[12.5px]" />
      <PriceRow plan="SV Grow" period="Per Month" prices={["$79 AUD + GST", "$197 AUD + GST", "$315 AUD + GST", "$610 AUD + GST"]} className="mt-[28.7px]" />
      <h3 className="mt-[31.5px] text-center text-[19.4px] leading-[24px]">Annual</h3>
      <PriceRow plan="SV Lite" period="Per Annum" prices={["$360 AUD + GST", "$1,080 AUD +\nGST", "$1,800 AUD +\nGST", "$3,000 AUD +\nGST"]} className="mt-[22.8px]" />
      <PriceRow plan="SV Grow" period="Per Annum" prices={["$708 AUD + GST", "$1,884 AUD +\nGST", "$3,060 AUD +\nGST", "$6,000 AUD +\nGST"]} className="mt-[28.6px]" />
      <table className="ml-[23px] mt-[72px] w-[758px] table-fixed border-collapse text-[15.05px] leading-[18px]">
        <colgroup>
          <col className="w-[344.5px]" />
          <col className="w-[206.5px]" />
          <col className="w-[207px]" />
        </colgroup>
        <tbody>
          <tr className="h-[41.25px]">
            <td />
            <td className={cell + "bg-[#c1e4f7]"}>SV Lite</td>
            <td className={cell + "bg-[#c1e4f7]"}>SV Grow</td>
          </tr>
          {MATRIX.map(([name, lite, grow]) => {
            const mark = (v: string) => (v === "X" ? "text-[18.5px]" : "text-[15.05px]");
            return (
              <tr key={name} className={lite.length > 1 ? "h-[48.2px]" : "h-[41.5px]"}>
                <td className={cell + "bg-[#c1e4f7]"}>{name}</td>
                <td className={cell + mark(lite)}>{lite}</td>
                <td className={cell + mark(grow)}>{grow}</td>
              </tr>
            );
          })}
        </tbody>
      </table>
    </Page>
  );
}

/* ---------- contact page ---------- */

function ContactPage() {
  return (
    <Page at="left-[3891.3px] top-[987.3px] h-[594.5px]" rule="gap">
      <div className={"flex grow flex-col " + POP}>
        <div className="h-[76px] border-b border-[#ececec] bg-[#f7f7f7] pt-[18.5px]">
          <Fit w={125.4} className="ml-[315px] text-[33px] leading-[38px] text-[#161922]">Contact</Fit>
        </div>
        <div className="flex h-[101px] items-start bg-[#fcfcfc] pl-[13.5px] pt-[35px] text-[#626262]">
          <svg viewBox="0 0 31 21" className="mt-[2px] h-[21px] w-[31px]">
            <g fill="none" stroke="#0089f7" strokeWidth="1.5" strokeLinejoin="round">
              <rect x="0.8" y="0.8" width="29.4" height="19.4" rx="2" />
              <path d="M2 3.5L13 13Q15.500 15 18 13L29 3.500M2 18.500L10.500 11M29 18.500L20.500 11" />
            </g>
          </svg>
          <div className="ml-[22px]">
            <Fit w={110} className="text-[11.5px] leading-[18.3px]">Have any questions?</Fit>
            <Fit w={153.8} className="text-[13.5px] font-medium leading-[18.3px]">hello@servicevault.com</Fit>
          </div>
        </div>
        <div className="flex grow bg-[#f9f9f9]">
          <div className="flex w-[242.7px] flex-col items-end pt-[68px] text-[12.3px] leading-[18.7px] text-[#626262]">
            <Fit w={212.7} className="text-[26.5px] font-medium leading-[34px] text-[#161922]">Write a message</Fit>
            <Fit w={216.4} className="mt-[8px]">If you got any questions, please do not</Fit>
            <Fit w={226.6}>hesitate to send us a message. We reply</Fit>
            <span className="flex">
              <Fit w={36.5}>{"within "}</Fit>
              <Fit w={49} className="border-b border-dashed border-[#b5b5b5]">24 hours</Fit>
              <Fit w={5.5}>{" !"}</Fit>
            </span>
          </div>
          <div className="ml-[20.5px] flex flex-col pt-[70.5px]">
            <div className="flex gap-[10.5px]">
              <Field label="Name:" w={31} box="mt-[4.7px] h-[28.5px] w-[154px]" />
              <Field label="E-mail address:" w={74.5} box="mt-[4.7px] h-[28.5px] w-[154px]" />
              <Field label="Subject:" w={37} box="mt-[4.7px] h-[28.5px] w-[154px]" />
            </div>
            <div className="mt-[10px]">
              <Field label="Message:" w={44.5} box={"mt-[4.7px] h-[138.5px] w-[483px] " + GRIP} />
            </div>
            <div className="mt-[12px] flex h-[26.5px] w-[95.3px] items-center justify-center rounded-[3px] bg-[#0089f7] text-[10.3px] font-medium text-white">
              <Fit w={70}>Send message</Fit>
            </div>
          </div>
        </div>
      </div>
    </Page>
  );
}

/* ---------- members login page ---------- */

function NetworkBackdrop() {
  const dots = [[4829.6, 1613.6], [4923.3, 1765.9], [5178.5, 1753.3], [5379.2, 1685.5], [5585.3, 1717.9], [5608.2, 1540.4]];
  return (
    <svg viewBox="4815 1520 806 263" className="absolute bottom-0 left-0 h-[263px] w-[806px]">
      <g stroke="#f4f6f9" strokeWidth="2" fill="none">
        <path d="M4829.6 1613.6L4923.3 1765.9M4829.6 1613.6L5178.5 1753.3L4923.3 1765.9L4864 1783M4814 1704L4958 1783M4814 1620L4829.6 1613.6" />
        <path d="M5178.5 1753.3L5379.2 1685.5L5585.3 1717.9L5178.5 1753.3L5158 1783M5379.2 1685.5L5608.2 1540.4L5585.3 1717.9L5622 1733" />
        <path d="M5585.3 1717.9L5433 1783M5585.3 1717.9L5545 1783M5608.2 1540.4L5622 1564" />
      </g>
      {dots.map(([x, y]) => (
        <circle key={x} cx={x} cy={y} r="11.5" fill="#edf2f9" />
      ))}
    </svg>
  );
}

function MembersPage() {
  return (
    <Page at="left-[4813.5px] top-[987.5px] h-[796.5px]" rule="none">
      <NetworkBackdrop />
      <div className={"relative flex flex-col pl-[153.5px] text-[#8f93a0] " + POP}>
        <VaultLogo tagline="CALL TRACKING SOFTWARE" className="ml-[60.5px] mt-[74px] h-[105px] w-[364px]" />
        <Fit w={255} className="ml-[114.5px] mt-[63px] text-[23.3px] leading-[28px] text-[#4e5361]">Sign In To Service Vault</Fit>
        <div className="mt-[66px] flex h-[51px] w-[483.5px] items-center rounded-[4px] bg-[#e8f0fe] pl-[23px] text-[15.8px] text-[#16181f] [font-family:'Liberation_Sans',Arial,sans-serif]">
          <Fit w={190.6}>dannym@codebooth.com.au</Fit>
        </div>
        <div className="mt-[22px] flex h-[51px] w-[483.5px] items-center rounded-[4px] bg-[#e8f0fe] pl-[23px]">
          <div className="flex gap-[1.2px]">
            {[0, 1, 2, 3, 4, 5, 6, 7, 8, 9].map((n) => (
              <span key={n} className="size-[4px] rounded-full bg-[#16181f]" />
            ))}
          </div>
        </div>
        <div className="mt-[34.5px] flex w-[483.5px] items-center text-[15px] leading-[20px]">
          <span className="size-[20px] rounded-[3px] border-[1.5px] border-[#d8dbe6] bg-white" />
          <Fit w={109.2} className="ml-[13.5px]">Remember me</Fit>
          <Fit w={130.7} className="ml-auto">Forget Password ?</Fit>
        </div>
        <div className="ml-[180px] mt-[45px] flex h-[56.5px] w-[124px] items-center justify-center rounded-[4px] bg-[#5e77ff] text-[15px] text-white shadow-[0_5px_16px_rgba(94,119,255,0.22)]">
          <Fit w={48.5}>Sign In</Fit>
        </div>
        <Fit w={57.3} className="ml-[213.5px] mt-[35px] text-[15px] leading-[20px] text-[#6b6f7a]">Sign-up</Fit>
      </div>
    </Page>
  );
}

/* ---------- connectors ---------- */

type Pt = [number, number];

/* Polyline with softly rounded corners. */
function route(points: Pt[], r = 3.5) {
  let d = `M${points[0][0]} ${points[0][1]}`;
  for (let i = 1; i < points.length - 1; i++) {
    const [px, py] = points[i - 1];
    const [x, y] = points[i];
    const [nx, ny] = points[i + 1];
    const a = Math.hypot(px - x, py - y);
    const b = Math.hypot(nx - x, ny - y);
    const ra = Math.min(r, a / 2);
    const rb = Math.min(r, b / 2);
    d += `L${x + ((px - x) / a) * ra} ${y + ((py - y) / a) * ra}Q${x} ${y} ${x + ((nx - x) / b) * rb} ${y + ((ny - y) / b) * rb}`;
  }
  const last = points[points.length - 1];
  return d + `L${last[0]} ${last[1]}`;
}

const EDGES: { tone: "grey" | "black" | "red"; pts: Pt[] }[] = [
  { tone: "grey", pts: [[308, 888], [413, 888], [413, 901]] },
  { tone: "grey", pts: [[365, 923.5], [353.6, 923.5], [353.6, 958]] },
  { tone: "black", pts: [[1040.3, 930], [1040.3, 993], [945.5, 993]] },
  { tone: "grey", pts: [[79, 1366.5], [114, 1366.5], [114, 1370.5], [149, 1370.5]] },
  { tone: "grey", pts: [[1259, 930.4], [1308.8, 930.4], [1308.8, 952], [1359, 952]] },
  { tone: "grey", pts: [[1540.5, 973.5], [1540.5, 987.3], [1401.5, 987.3], [1401.5, 1001]] },
  { tone: "red", pts: [[1366.3, 837], [1366.3, 859], [1291.5, 859], [1291.5, 1216.5], [1369.5, 1216.5]] },
  { tone: "black", pts: [[1781, 766], [1781, 728.7], [1760.6, 728.7], [1760.6, 692.5]] },
  { tone: "black", pts: [[1781, 880], [1781, 894.5], [1934.8, 894.5], [1934.8, 1227], [1904.3, 1227]] },
  { tone: "black", pts: [[1917, 1338], [1917, 1301.4], [1865, 1301.4]] },
  { tone: "black", pts: [[1917, 1424], [1917, 1476.6], [1865, 1476.6]] },
  { tone: "grey", pts: [[2225, 927.7], [2274.4, 927.7], [2274.4, 949.4], [2324, 949.4]] },
  { tone: "grey", pts: [[2506.3, 971], [2506.3, 985.3], [2367.6, 985.3], [2367.6, 999]] },
  { tone: "grey", pts: [[3162, 908.8], [3294.5, 908.8], [3294.5, 923]] },
  { tone: "grey", pts: [[3219.5, 944.8], [3207.7, 944.8], [3207.7, 980]] },
  { tone: "black", pts: [[3260, 1285], [3278, 1285], [3278, 1305.3], [3296.5, 1305.3]] },
  { tone: "black", pts: [[3260, 1285], [3272.5, 1285], [3272.5, 1331], [3456.8, 1331], [3456.8, 1317.5]] },
  { tone: "grey", pts: [[3387, 1305.7], [3395.7, 1305.7], [3395.7, 1338.2], [3726.2, 1338.2], [3726.2, 1810], [3681.5, 1810]] },
  { tone: "grey", pts: [[3501, 1305.7], [3694.6, 1305.7], [3694.6, 1445], [3681.5, 1445]] },
  { tone: "grey", pts: [[3694.6, 1440], [3694.6, 1602.4], [3681.5, 1602.4]] },
  { tone: "grey", pts: [[4056, 916.6], [4186, 916.6], [4186, 930]] },
  { tone: "grey", pts: [[4113, 951.5], [4101.3, 951.5], [4101.3, 987]] },
  { tone: "grey", pts: [[4978, 916.4], [5106.4, 916.4], [5106.4, 930]] },
  { tone: "grey", pts: [[5036, 951.7], [5024.4, 951.7], [5024.4, 987]] },
  { tone: "black", pts: [[5742.3, 1286], [5742.3, 1233.5], [5623, 1233.5]] },
  { tone: "black", pts: [[5742.3, 1445], [5742.3, 1544.6], [5623, 1544.6]] },
];

const TONES = { grey: "#5e5e5e", black: "#000000", red: "#cf2a36" };

function Connectors() {
  return (
    <svg viewBox="0 0 5856 2732" className="pointer-events-none absolute left-0 top-0 h-[2732px] w-[5856px]">
      <defs>
        {(["grey", "black", "red"] as const).map((t) => (
          <marker key={t} id={`tip-${t}`} markerUnits="userSpaceOnUse" markerWidth="8" markerHeight="5.6" refX="7.5" refY="2.8" orient="auto" viewBox="0 0 8 5.6">
            <path d="M0 0L8 2.8L0 5.6Z" fill={TONES[t]} />
          </marker>
        ))}
      </defs>
      {EDGES.map((e, i) => (
        <path key={i} d={route(e.pts)} fill="none" stroke={TONES[e.tone]} strokeWidth={e.tone === "black" ? 1.8 : 1.3} markerEnd={`url(#tip-${e.tone})`} />
      ))}
    </svg>
  );
}

export default function App() {
  return (
    <main className="h-[1911px] w-[4096px] overflow-hidden bg-white">
      <div className="relative h-[2732px] w-[5856px] text-[#333333] [font-family:'Liberation_Sans',Arial,sans-serif] [text-rendering:geometricPrecision] [zoom:0.69945]">
        <FeaturesSheet />
        {PAGE_TITLES.map(([title, at]) => (
          <h1 key={title} className={"absolute -translate-x-1/2 whitespace-nowrap text-[25.1px] leading-[30px] " + at}>{title}</h1>
        ))}
        {HEADING_BOXES.map((at) => (
          <div key={at} className={"absolute flex h-[43.5px] w-[363px] items-center whitespace-pre rounded-[3px] border-[1.5px] border-[#5e5e5e] bg-white pb-[3px] pl-[6px] text-[12px] font-bold " + at}>
            {"Features   Industries    Pricing    Contact      Members Login"}
          </div>
        ))}
        <HomePage />
        <FeaturesPage />
        <IndustriesPage />
        <PricingPage />
        <ContactPage />
        <MembersPage />
        <Connectors />
        {NOTES.map(([text, at]) => (
          <Note key={at} text={text} at={at} />
        ))}
      </div>
    </main>
  );
}
